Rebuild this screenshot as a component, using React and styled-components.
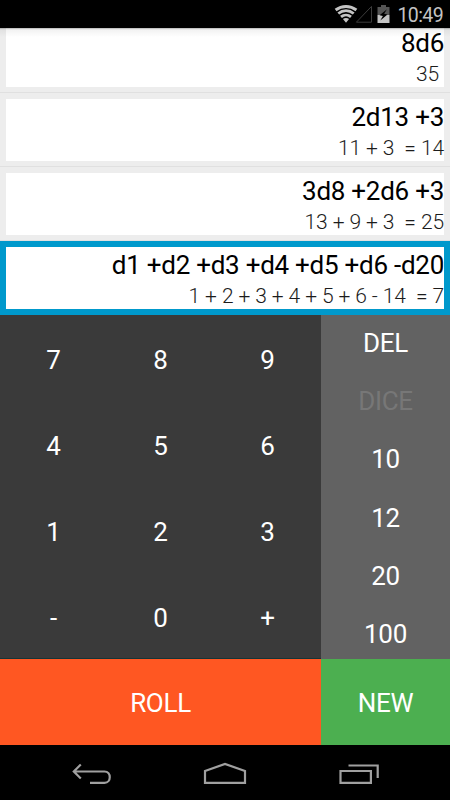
import styled, { createGlobalStyle } from "styled-components";

const rolls = [
  { id: 1, formula: "8d6", result: "35 " },
  { id: 2, formula: "2d13 +3", result: "11 + 3  = 14" },
  { id: 3, formula: "3d8 +2d6 +3", result: "13 + 9 + 3  = 25" },
  {
    id: 4,
    formula: "d1 +d2 +d3 +d4 +d5 +d6 -d20",
    result: "1 + 2 + 3 + 4 + 5 + 6 - 14  = 7",
  },
];

const numberKeys = ["7", "8", "9", "4", "5", "6", "1", "2", "3", "-", "0", "+"];
const sideKeys = ["DEL", "DICE", "10", "12", "20", "100"];

const WifiIcon = () => (
  <svg width="24" height="18" viewBox="0 0 24 18" fill="none" stroke="#c4c4c4">
    <path d="M1.6 5C7.8.3 16.2.3 22.4 5" strokeWidth="2.9" />
    <path d="M4.3 8.5c4.6-3.8 10.8-3.8 15.4 0" strokeWidth="2.8" />
    <path d="M7 11.9c2.9-2.5 7.1-2.5 10 0" strokeWidth="2.8" />
    <path d="M8.9 14.1c1.9-1.4 4.3-1.4 6.2 0L12 17.8z" fill="#c4c4c4" stroke="none" />
  </svg>
);

const SignalIcon = () => (
  <svg width="18" height="18" viewBox="0 0 18 18" fill="none">
    <path d="M1.4 17.2L16.5 1.4v15.8z" stroke="#3c3c3c" />
  </svg>
);

const BatteryIcon = () => (
  <svg width="13" height="18" viewBox="0 0 13 18">
    <path d="M4 0h5v2h3.5v8H.5V2H4z" fill="#555" />
    <path d="M.5 10h12v8H.5z" fill="#c4c4c4" />
    <path d="M10 4.2L2.6 10.3l3.3.7-2.6 4.6 7.2-6.1-3.4-.8z" fill="#000" />
  </svg>
);

const BackIcon = () => (
  <svg width="42" height="24" viewBox="0 0 42 24" fill="none" stroke="#a0a0a0" strokeWidth="2.2">
    <path d="M10.8 2.5L3.8 9.5l7 7M4 9.5h30.5c7 0 7 11.3 0 11.3H20" />
  </svg>
);

const HomeIcon = () => (
  <svg width="44" height="24" viewBox="0 0 44 24" fill="none" stroke="#a0a0a0" strokeWidth="2.2">
    <path d="M2 9L22 1.9 42 9v11.8H2z" />
  </svg>
);

const RecentIcon = () => (
  <svg width="42" height="24" viewBox="0 0 42 24" fill="none" stroke="#a0a0a0" strokeWidth="2.2">
    <path d="M2.5 9h30.4v11.8H2.5zM10.5 3.5h29.2V16" />
  </svg>
);

const App = () => {
  return (
    <>
      <GlobalStyle />
      <Screen>
        <StatusBar>
          <WifiIcon />
          <SignalIcon />
          <BatteryIcon />
          <Clock>10:49</Clock>
        </StatusBar>
        <RollList>
          {rolls.map(({ id, formula, result }) => (
            <RollRow key={id} $selected={id === 4}>
              <RollCard>
                <Formula>{formula}</Formula>
                <Result>{result}</Result>
              </RollCard>
            </RollRow>
          ))}
        </RollList>
        <Keyboard>
          <NumberPad>
            {numberKeys.map((key) => (
              <Key key={key}>{key}</Key>
            ))}
          </NumberPad>
          <SidePad>
            {sideKeys.map((key) => (
              <SideKey key={key} disabled={key === "DICE"}>
                {key}
              </SideKey>
            ))}
          </SidePad>
          <ActionKey $bg="#ff5722">ROLL</ActionKey>
          <ActionKey $bg="#4caf50">NEW</ActionKey>
        </Keyboard>
        <NavBar>
          <BackIcon />
          <HomeIcon />
          <RecentIcon />
        </NavBar>
      </Screen>
    </>
  );
};
export default App;

const GlobalStyle = createGlobalStyle`
  * {
    box-sizing: border-box;
    margin: 0;
    padding: 0;
  }

  body {
    background: #000;
    font-family: Roboto, sans-serif;
  }
`;

const Screen = styled.div`
  display: grid;
  grid-template-rows: 28px 287px 430px 55px;
  width: 450px;
  height: 800px;
  overflow: hidden;
`;

const StatusBar = styled.header`
  display: flex;
  justify-content: flex-end;
  align-items: center;
  padding: 0 7px 0 0;
  background: #000;

  svg {
    flex: none;
  }

  svg + svg {
    margin-left: -3px;
  }

  svg:nth-child(3) {
    margin-left: 4px;
  }
`;

const Clock = styled.span`
  margin-left: 7px;
  padding-top: 3px;
  color: #c4c4c4;
  font-size: 19.5px;
  letter-spacing: -0.6px;
  line-height: 22px;
`;

const RollList = styled.main`
  position: relative;
  display: flex;
  flex-direction: column;
  justify-content: flex-end;
  overflow: hidden;
  background: #ededed;

  &::before {
    content: "";
    position: absolute;
    top: 0;
    left: 0;
    right: 0;
    height: 9px;
    z-index: 1;
    background: linear-gradient(rgba(0, 0, 0, 0.3), rgba(0, 0, 0, 0.05) 20%, transparent);
  }
`;

const RollRow = styled.section`
  flex: none;
  height: 74px;
  padding: 6px;
  background: ${({ $selected }) => ($selected ? "#0099cc" : "#ededed")};
  box-shadow: ${({ $selected }) => ($selected ? "none" : "inset 0 -1px #e0e0e0")};
`;

const RollCard = styled.article`
  height: 62px;
  background: #fff;
  text-align: right;
  white-space: pre;
`;

const Formula = styled.h3`
  padding-top: 1px;
  color: #000;
  font-size: 26px;
  font-weight: 400;
  letter-spacing: -0.26px;
  line-height: 34px;
`;

const Result = styled.p`
  padding-top: 1px;
  color: #1c1c1c;
  font-size: 21px;
  font-weight: 300;
  letter-spacing: -0.1px;
  line-height: 26px;
`;

const Keyboard = styled.section`
  display: grid;
  grid-template-columns: 321px 129px;
  grid-template-rows: 344px 86px;
`;

const NumberPad = styled.div`
  display: grid;
  grid-template-columns: repeat(3, 1fr);
  grid-template-rows: repeat(4, 1fr);
  background: #3a3a3a;
  box-shadow: inset 0 -1px #163437;
`;

const SidePad = styled.div`
  display: flex;
  flex-direction: column;
  justify-content: space-between;
  padding-top: 3px;
  background: #626262;
`;

const Key = styled.button`
  display: flex;
  align-items: center;
  justify-content: center;
  padding-top: 3px;
  border: none;
  background: none;
  color: #fff;
  font-family: inherit;
  font-size: 26px;
  letter-spacing: -0.3px;
  line-height: 30px;
`;

const SideKey = styled(Key)`
  height: 49px;
  padding-top: 0;
  color: ${({ disabled }) => (disabled ? "#777" : "#fff")};
`;

const ActionKey = styled(Key)`
  padding-top: 1px;
  background: ${({ $bg }) => $bg};
`;

const NavBar = styled.nav`
  display: flex;
  justify-content: space-between;
  align-items: center;
  padding: 3px 70px 0 70px;
  background: #000;
`;
